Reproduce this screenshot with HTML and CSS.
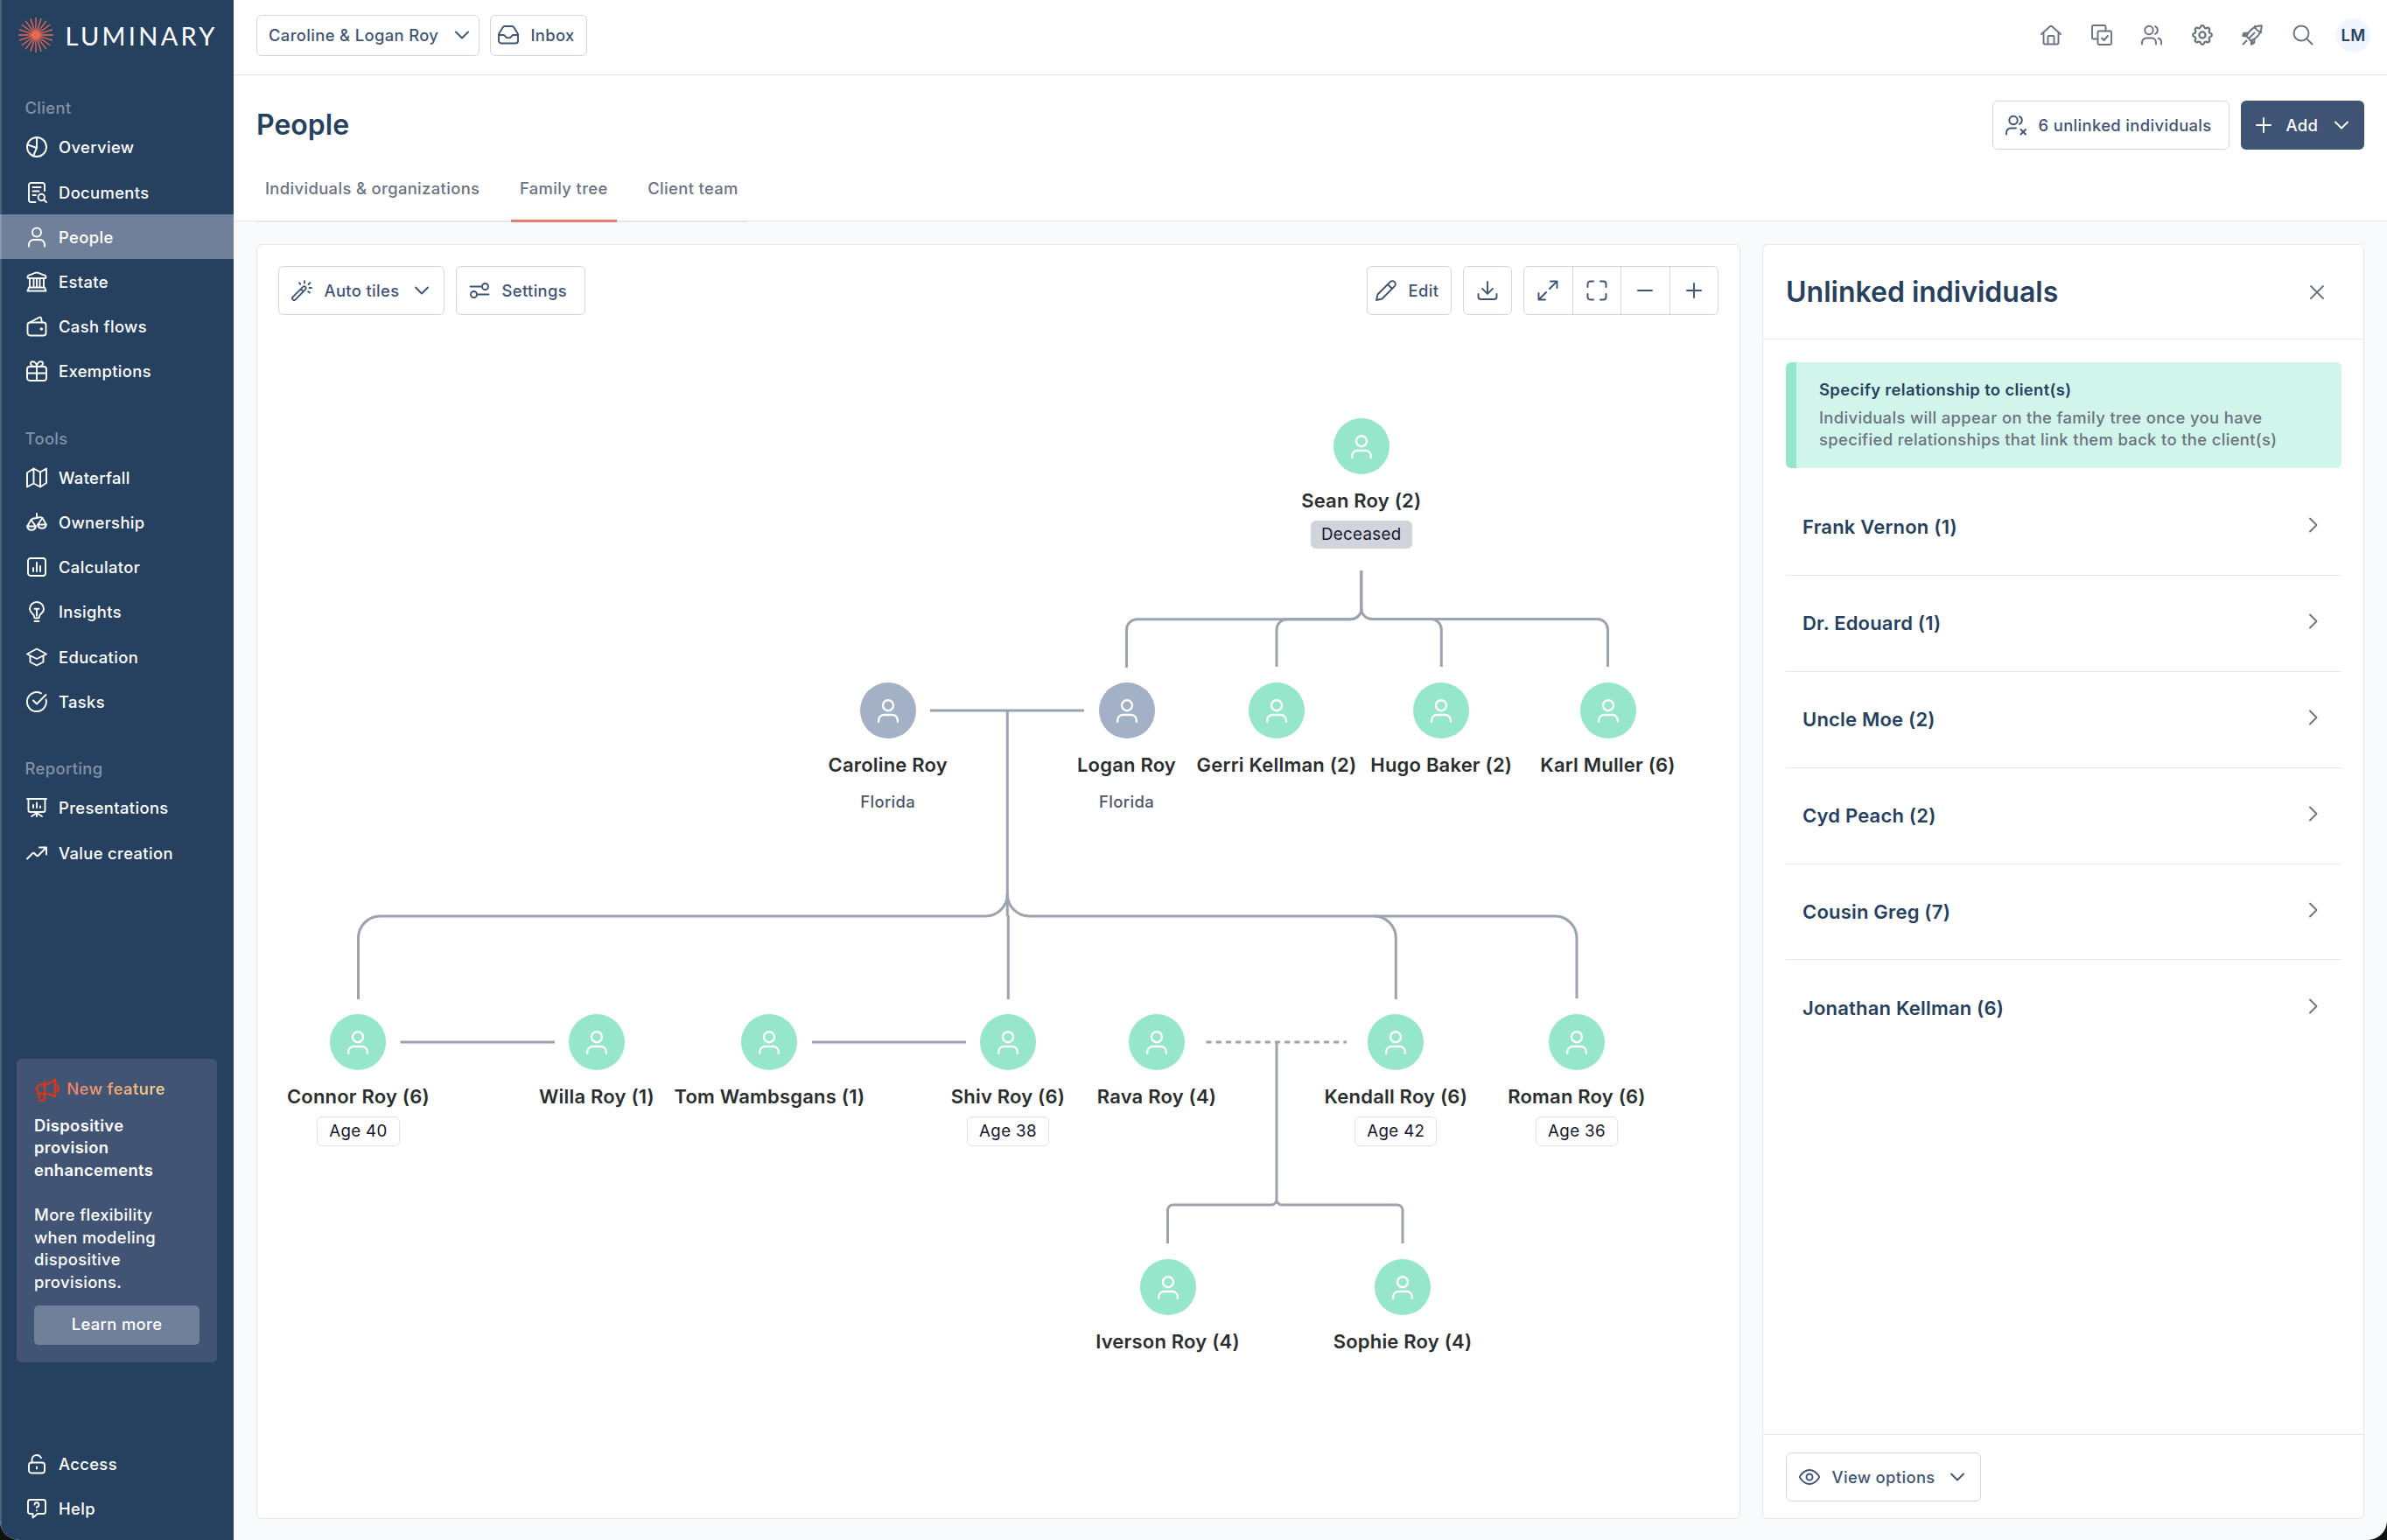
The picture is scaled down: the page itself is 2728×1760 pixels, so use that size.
FILE: index.html
```html
<!DOCTYPE html>
<html lang="en">
<head>
  <meta charset="UTF-8" />
  <meta name="viewport" content="width=device-width, initial-scale=1.0" />
  <title>People - Luminary</title>
  <link rel="stylesheet" href="styles.css">
</head>
<body>

  <!-- Icon sprite -->
  <svg class="sprite" aria-hidden="true">
    <symbol id="i-chevron" viewBox="0 0 24 24"><path d="M5 8.5l7 7 7-7"/></symbol>
    <symbol id="i-right" viewBox="0 0 24 24"><path d="M8 4.5l7.500 7.500L8 19.500"/></symbol>
    <symbol id="i-inbox" viewBox="0 0 24 24"><path d="M5.500 3.500a3 3 0 0 1 2.500-1.500h8a3 3 0 0 1 2.500 1.500L23 11v7.500a3 3 0 0 1-3 3H4a3 3 0 0 1-3-3V11z"/><path d="M1 12h5.500c.8 0 1.300.4 1.700 1.200.7 1.300 2 2.200 3.800 2.200s3.100-.9 3.800-2.200c.4-.8.900-1.200 1.700-1.200H23"/></symbol>
    <symbol id="i-overview" viewBox="0 0 24 24"><circle cx="12" cy="12" r="11"/><path d="M12 1v12L8 22.200M12 13L1.400 9.300"/></symbol>
    <symbol id="i-documents" viewBox="0 0 24 24"><path d="M10.500 23H5.500a2.500 2.500 0 0 1-2.500-2.500v-17A2.500 2.500 0 0 1 5.500 1h13A2.500 2.500 0 0 1 21 3.500V10M7.500 6h9M7.500 10.500h7M7.500 15H11"/><circle cx="17.300" cy="17.500" r="3.700"/><path d="M20 20.200l3 2.800"/></symbol>
    <symbol id="i-person" viewBox="0 0 24 24"><circle cx="12" cy="6.500" r="5"/><path d="M3 22.500v-2A5.500 5.500 0 0 1 8.500 15h7a5.500 5.500 0 0 1 5.500 5.500v2"/></symbol>
    <symbol id="i-avatar" viewBox="0 0 24 27"><circle cx="12" cy="7.200" r="6"/><path d="M1.200 25.800V24a6 6 0 0 1 6-6h9.600a6 6 0 0 1 6 6v1.800"/></symbol>
    <symbol id="i-estate" viewBox="0 0 24 24"><path d="M3 4.500C6 3.800 9.500 1.500 12 1.500s6 2.300 9 3c1.300.4 1.500 1.300 1.500 2.500 0 .7-.4 1-1 1h-19c-.6 0-1-.3-1-1 0-1.200.3-2.200 1.500-2.500zM4 8v10M8.500 8v10M15.500 8v10M20 8v10M12 8v10M3 18.500h18l1.500 4h-21z"/></symbol>
    <symbol id="i-cash" viewBox="0 0 24 24"><rect x="1.500" y="7.500" width="21" height="15" rx="3"/><path d="M3 8L15 1.600c.8-.4 1.800 0 2 1L18 7.500"/><circle cx="17.300" cy="15" r=".8"/></symbol>
    <symbol id="i-gift" viewBox="0 0 24 24"><rect x="1" y="7" width="22" height="16" rx="3"/><path d="M1 14.500h22M12 7v16M12 7C8.500 7 5 5.800 5 3.500 5 2 6.200 1.200 7.500 1.200 10 1.200 12 4 12 7zM12 7c3.500 0 7-1.200 7-3.500 0-1.500-1.200-2.300-2.500-2.300C14 1.200 12 4 12 7z"/></symbol>
    <symbol id="i-map" viewBox="0 0 24 24"><path d="M1 6.200l7.500-4.700 7.500 4 7-4V18l-7 4.500-7.500-4L1 22.500zM8.500 1.500v17M16 5.500v17"/></symbol>
    <symbol id="i-scales" viewBox="0 0 24 24"><path d="M12 2v5M5.500 9C8 6.500 9.500 7.500 12 7c2.500-.5 4-2 6.500 0"/><path d="M1.200 16.500L5.500 9l5.300 7.500zM13.200 14.500L18.500 7l4.300 7.500z"/><path d="M1.200 16.500a4.900 4.900 0 0 0 9.700 0M13.100 14.500a4.900 4.900 0 0 0 9.700 0"/></symbol>
    <symbol id="i-calc" viewBox="0 0 24 24"><rect x="2" y="2" width="20" height="20" rx="3"/><path d="M8 17v-4M12 17V7M16 17v-6"/></symbol>
    <symbol id="i-bulb" viewBox="0 0 24 24"><path d="M9 17.500c0-1.500-.8-2.300-2-3.300A7.700 7.700 0 0 1 4 8.800 8 8 0 0 1 12 1a8 8 0 0 1 8 7.800c0 2.200-1.200 4.200-3 5.400-1.200 1-2 1.800-2 3.300a2 2 0 0 1-2 2h-2a2 2 0 0 1-2-2zM9.500 23h5M9.500 8.800h5M12 8.800v8"/></symbol>
    <symbol id="i-education" viewBox="0 0 24 24"><path d="M1 8.500L12 2.500l11 6-11 5.500zM4.500 10.500v7L12 21.500l7.500-4v-7"/></symbol>
    <symbol id="i-tasks" viewBox="0 0 24 24"><path d="M22.600 9.500A11 11 0 1 1 17 2.300M8 10.500l4 4L22.500 4"/></symbol>
    <symbol id="i-present" viewBox="0 0 24 24"><path d="M1 2h22M2.500 2v13a2 2 0 0 0 2 2h15a2 2 0 0 0 2-2V2M8 12V9M12 12V6.500M16 12v-1.500M12 17v5M12 18l-6 4M12 18l6 4"/></symbol>
    <symbol id="i-trend" viewBox="0 0 24 24"><path d="M1 18.500l6-6c.8-.8 1.700-.8 2.500 0l2 2c.8.8 1.700.8 2.500 0L22.500 6M15 5.500h8v8"/></symbol>
    <symbol id="i-horn" viewBox="0 0 30 28"><path d="M12 8.500H7.500a5.300 5.300 0 0 0 0 10.500H12c4 0 8 1 12 3V2.500C20 5.500 16 8.500 12 8.500zM12 5.500V24a3 3 0 0 1-6 0L5 19M24 8.500a4 4 0 0 1 0 8"/></symbol>
    <symbol id="i-lock" viewBox="0 0 24 24"><rect x="3" y="10.500" width="18" height="12" rx="3"/><path d="M6.500 10.500V7.500a5.500 5.500 0 0 1 10.500-2.300M12 15.500v2"/></symbol>
    <symbol id="i-help" viewBox="0 0 24 24"><path d="M4.500 2h15A2.500 2.500 0 0 1 22 4.500v11a2.500 2.500 0 0 1-2.500 2.500H13l-5.500 4.500V18h-3A2.500 2.500 0 0 1 2 15.500v-11A2.500 2.500 0 0 1 4.500 2z"/><path d="M9.500 7.500A2.500 2.500 0 1 1 12 10.200V11M12 14.300v.2"/></symbol>
    <symbol id="i-home" viewBox="0 0 24 24"><path d="M1 11l9.800-8.700a1.800 1.800 0 0 1 2.400 0L23 11M3.500 9v11.500A2 2 0 0 0 5.500 22.500h13a2 2 0 0 0 2-2V9M8.500 22.500V14a1 1 0 0 1 1-1h5a1 1 0 0 1 1 1v8.500"/></symbol>
    <symbol id="i-copy" viewBox="0 0 24 24"><path d="M7.500 16.500h-5A1.500 1.500 0 0 1 1 15V2.500A1.500 1.500 0 0 1 2.500 1H15a1.500 1.500 0 0 1 1.500 1.500v5"/><rect x="7.500" y="7.500" width="15.500" height="15.500" rx="1.500"/><path d="M12 15.500l2.500 2.500 4.500-5"/></symbol>
    <symbol id="i-people" viewBox="0 0 24 24"><circle cx="9" cy="6.500" r="4.700"/><path d="M1 22.500v-2a5 5 0 0 1 5-5h6a5 5 0 0 1 5 5v2M16 2.200a4.700 4.700 0 0 1 0 8.600M19.500 15.800a4.500 4.500 0 0 1 3.500 4.500v2.200"/></symbol>
    <symbol id="i-unlinked" viewBox="0 0 24 24"><circle cx="9" cy="6.500" r="4.700"/><path d="M1 22.500v-2a5 5 0 0 1 5-5h6M16 2.200a4.700 4.700 0 0 1 0 8.600M17.500 17l5.500 5.500M23 17l-5.500 5.500"/></symbol>
    <symbol id="i-gear" viewBox="2 2 20 20"><path d="M10.325 4.317c.426-1.756 2.924-1.756 3.350 0a1.724 1.724 0 0 0 2.573 1.066c1.543-.94 3.310.826 2.370 2.370a1.724 1.724 0 0 0 1.065 2.572c1.756.426 1.756 2.924 0 3.350a1.724 1.724 0 0 0-1.066 2.573c.94 1.543-.826 3.310-2.370 2.370a1.724 1.724 0 0 0-2.572 1.065c-.426 1.756-2.924 1.756-3.350 0a1.724 1.724 0 0 0-2.573-1.066c-1.543.94-3.310-.826-2.370-2.370a1.724 1.724 0 0 0-1.065-2.572c-1.756-.426-1.756-2.924 0-3.350a1.724 1.724 0 0 0 1.066-2.573c-.94-1.543.826-3.310 2.370-2.370 1 .608 2.296.07 2.572-1.065z"/><circle cx="12" cy="12" r="3"/></symbol>
    <symbol id="i-rocket" viewBox="0 0 24 24"><path d="M5.500 13.500C8 7.500 13 1.500 22.800 1.200 22.500 11 16.500 16 10.500 18.500zM15 1.800C16 6 18 8 22.200 9M8 9.500L3 9.800 1.200 13l4.300.5M14.500 16l-.3 5-3.200 1.800-.5-4.300M5.500 18.500L1.500 22.500M6 12.500L1.500 10.500M8.500 15.500l6-6M11.500 18l1 3"/></symbol>
    <symbol id="i-search" viewBox="0 0 24 24"><circle cx="10" cy="10" r="8.500"/><path d="M16.200 16.200l6.300 6.300"/></symbol>
    <symbol id="i-plus" viewBox="0 0 24 24"><path d="M12 4v16M4 12h16"/></symbol>
    <symbol id="i-minus" viewBox="0 0 24 24"><path d="M4 12h16"/></symbol>
    <symbol id="i-close" viewBox="0 0 24 24"><path d="M5 5l14 14M19 5L5 19"/></symbol>
    <symbol id="i-wand" viewBox="0 0 24 24"><path d="M1.700 19.300L13.200 7.800a2 2 0 0 1 2.900 2.900L4.700 22.300a2 2 0 0 1-3-3zM10.800 10.300l2.800 2.800M15 1.200v2.300M9 3.200l1.300 1.600M21.300 3.200L19.600 5M23 9h-2.500M21 14.500l-1.800-1.300"/></symbol>
    <symbol id="i-settings" viewBox="0 0 24 24"><circle cx="18.500" cy="7.500" r="3.500"/><circle cx="5.500" cy="16.500" r="3.500"/><path d="M1.500 7.500H15M9 16.500h13.500"/></symbol>
    <symbol id="i-edit" viewBox="0 0 24 24"><path d="M1 23l1.500-6.500L16.800 2.200a3.500 3.500 0 0 1 5 5L7.500 21.500zM14 5l5 5"/></symbol>
    <symbol id="i-download" viewBox="0 0 24 24"><path d="M12 2v13.500M6 9.800l6 6 6-6M1.500 16v3A3 3 0 0 0 4.500 22h15a3 3 0 0 0 3-3v-3"/></symbol>
    <symbol id="i-expand" viewBox="0 0 24 24"><path d="M14 10l8.500-8.500M15 1.500h7.500V9M10 14l-8.500 8.500M1.500 15v7.500H9"/></symbol>
    <symbol id="i-frame" viewBox="0 0 24 24"><path d="M1.500 8V4.500a3 3 0 0 1 3-3H8M16 1.500h3.500a3 3 0 0 1 3 3V8M22.500 16v3.500a3 3 0 0 1-3 3H16M8 22.500H4.500a3 3 0 0 1-3-3V16"/></symbol>
    <symbol id="i-eye" viewBox="0 0 24 24"><path d="M1.500 10.500C4 7 7.500 4 12 4s8 3 10.500 6.500c.7 1 .7 2 0 3C20 17 16.500 20 12 20s-8-3-10.500-6.500c-.7-1-.7-2 0-3z"/><circle cx="12" cy="12" r="3.500"/></symbol>
  </svg>

  <div class="app">

    <aside class="sidebar">
      <div class="logo">
        <svg class="logo-mark" viewBox="-20 -20 40 40">
          <path d="M0-20V20M-20 0H20M-6.200-19L6.200 19M6.200-19L-6.200 19M-11.800-16.200L11.800 16.200M11.800-16.200L-11.800 16.200M-16.200-11.800L16.200 11.800M16.200-11.800L-16.200 11.800M-19-6.200L19 6.200M19-6.200L-19 6.200"/>
          <circle r="3.500"/>
        </svg>
        <span class="logo-text">LUMINARY</span>
      </div>

      <nav class="nav-group">
        <h2 class="nav-heading">Client</h2>
        <a class="nav-item"><svg class="icon"><use href="#i-overview"/></svg>Overview</a>
        <a class="nav-item"><svg class="icon"><use href="#i-documents"/></svg>Documents</a>
        <a class="nav-item active"><svg class="icon"><use href="#i-person"/></svg>People</a>
        <a class="nav-item"><svg class="icon"><use href="#i-estate"/></svg>Estate</a>
        <a class="nav-item"><svg class="icon"><use href="#i-cash"/></svg>Cash flows</a>
        <a class="nav-item"><svg class="icon"><use href="#i-gift"/></svg>Exemptions</a>
      </nav>

      <nav class="nav-group">
        <h2 class="nav-heading">Tools</h2>
        <a class="nav-item"><svg class="icon"><use href="#i-map"/></svg>Waterfall</a>
        <a class="nav-item"><svg class="icon"><use href="#i-scales"/></svg>Ownership</a>
        <a class="nav-item"><svg class="icon"><use href="#i-calc"/></svg>Calculator</a>
        <a class="nav-item"><svg class="icon"><use href="#i-bulb"/></svg>Insights</a>
        <a class="nav-item"><svg class="icon"><use href="#i-education"/></svg>Education</a>
        <a class="nav-item"><svg class="icon"><use href="#i-tasks"/></svg>Tasks</a>
      </nav>

      <nav class="nav-group">
        <h2 class="nav-heading">Reporting</h2>
        <a class="nav-item"><svg class="icon"><use href="#i-present"/></svg>Presentations</a>
        <a class="nav-item"><svg class="icon"><use href="#i-trend"/></svg>Value creation</a>
      </nav>

      <div class="feature">
        <div class="feature-head">
          <svg class="feature-icon"><use href="#i-horn"/></svg>
          <span class="feature-label">New feature</span>
        </div>
        <p class="feature-title">Dispositive provision enhancements</p>
        <p class="feature-text">More flexibility when modeling dispositive provisions.</p>
        <button class="feature-btn">Learn more</button>
      </div>

      <nav class="nav-bottom">
        <a class="nav-item"><svg class="icon"><use href="#i-lock"/></svg>Access</a>
        <a class="nav-item"><svg class="icon"><use href="#i-help"/></svg>Help</a>
      </nav>
    </aside>

    <main class="main">
      <header class="topbar">
        <button class="btn btn-client">Caroline &amp; Logan Roy<svg class="chevron"><use href="#i-chevron"/></svg></button>
        <button class="btn btn-inbox"><svg class="icon"><use href="#i-inbox"/></svg>Inbox</button>
        <div class="top-icons">
          <svg class="icon"><use href="#i-home"/></svg>
          <svg class="icon"><use href="#i-copy"/></svg>
          <svg class="icon"><use href="#i-people"/></svg>
          <svg class="icon"><use href="#i-gear"/></svg>
          <svg class="icon"><use href="#i-rocket"/></svg>
          <svg class="icon"><use href="#i-search"/></svg>
        </div>
        <div class="user">LM</div>
      </header>

      <section class="page-head">
        <div class="title-row">
          <h1>People</h1>
          <button class="btn btn-unlinked"><svg class="icon"><use href="#i-unlinked"/></svg>6 unlinked individuals</button>
          <button class="btn btn-add"><svg class="icon"><use href="#i-plus"/></svg>Add<svg class="chevron"><use href="#i-chevron"/></svg></button>
        </div>
        <div class="tabs">
          <a class="tab">Individuals &amp; organizations</a>
          <a class="tab active">Family tree</a>
          <a class="tab">Client team</a>
        </div>
      </section>

      <div class="content">
        <section class="card tree">
          <div class="toolbar">
            <button class="btn btn-tiles"><svg class="icon"><use href="#i-wand"/></svg>Auto tiles<svg class="chevron"><use href="#i-chevron"/></svg></button>
            <button class="btn btn-settings"><svg class="icon"><use href="#i-settings"/></svg>Settings</button>
            <button class="btn btn-edit"><svg class="icon"><use href="#i-edit"/></svg>Edit</button>
            <button class="btn btn-icon"><svg class="icon"><use href="#i-download"/></svg></button>
            <div class="btn-group">
              <button><svg class="icon"><use href="#i-expand"/></svg></button>
              <button><svg class="icon"><use href="#i-frame"/></svg></button>
              <button><svg class="icon"><use href="#i-minus"/></svg></button>
              <button><svg class="icon"><use href="#i-plus"/></svg></button>
            </div>
          </div>

          <div class="canvas">
            <svg class="links" viewBox="294 280 1694 1455">
              <!-- Sean and his children -->
              <path d="M1555.800 652V695.700a12 12 0 0 1-12 12H1299.500a12 12 0 0 0-12 12V763"/>
              <path d="M1543.800 707.700H1471a12 12 0 0 0-12 12V762"/>
              <path d="M1555.800 652V695.500a12 12 0 0 0 12 12H1825.500a12 12 0 0 1 12 12V762"/>
              <path d="M1567.800 707.500H1635.300a12 12 0 0 1 12 12V762"/>
              <!-- Caroline and Logan -->
              <path d="M1063 812H1239M1151.300 812V1047M1152.300 1046V1142"/>
              <path d="M1151.300 1022a25 25 0 0 1-25 25H434.500a25 25 0 0 0-25 25V1142"/>
              <path d="M1151.300 1022a25 25 0 0 0 25 25H1570.300a25 25 0 0 1 25 25V1142"/>
              <path d="M1570.300 1047H1777a25 25 0 0 1 25 25V1141"/>
              <!-- couples -->
              <path d="M457.500 1191H634M928 1191H1104"/>
              <path class="dashed" d="M1378.500 1191H1539"/>
              <path d="M1459 1191V1371a6 6 0 0 1-6 6H1340.500a6 6 0 0 0-6 6V1421M1459 1371a6 6 0 0 0 6 6H1597a6 6 0 0 1 6 6V1421"/>
            </svg>

            <div class="node sean"><span class="avatar"><svg><use href="#i-avatar"/></svg></span><b>Sean Roy (2)</b><span class="badge deceased">Deceased</span></div>

            <div class="node caroline client"><span class="avatar"><svg><use href="#i-avatar"/></svg></span><b>Caroline Roy</b><span class="place">Florida</span></div>
            <div class="node logan client"><span class="avatar"><svg><use href="#i-avatar"/></svg></span><b>Logan Roy</b><span class="place">Florida</span></div>
            <div class="node gerri"><span class="avatar"><svg><use href="#i-avatar"/></svg></span><b>Gerri Kellman (2)</b></div>
            <div class="node hugo"><span class="avatar"><svg><use href="#i-avatar"/></svg></span><b>Hugo Baker (2)</b></div>
            <div class="node karl"><span class="avatar"><svg><use href="#i-avatar"/></svg></span><b>Karl Muller (6)</b></div>

            <div class="node connor"><span class="avatar"><svg><use href="#i-avatar"/></svg></span><b>Connor Roy (6)</b><span class="badge">Age 40</span></div>
            <div class="node willa"><span class="avatar"><svg><use href="#i-avatar"/></svg></span><b>Willa Roy (1)</b></div>
            <div class="node tom"><span class="avatar"><svg><use href="#i-avatar"/></svg></span><b>Tom Wambsgans (1)</b></div>
            <div class="node shiv"><span class="avatar"><svg><use href="#i-avatar"/></svg></span><b>Shiv Roy (6)</b><span class="badge">Age 38</span></div>
            <div class="node rava"><span class="avatar"><svg><use href="#i-avatar"/></svg></span><b>Rava Roy (4)</b></div>
            <div class="node kendall"><span class="avatar"><svg><use href="#i-avatar"/></svg></span><b>Kendall Roy (6)</b><span class="badge">Age 42</span></div>
            <div class="node roman"><span class="avatar"><svg><use href="#i-avatar"/></svg></span><b>Roman Roy (6)</b><span class="badge">Age 36</span></div>

            <div class="node iverson"><span class="avatar"><svg><use href="#i-avatar"/></svg></span><b>Iverson Roy (4)</b></div>
            <div class="node sophie"><span class="avatar"><svg><use href="#i-avatar"/></svg></span><b>Sophie Roy (4)</b></div>
          </div>
        </section>

        <aside class="card panel">
          <div class="panel-head">
            <h2>Unlinked individuals</h2>
            <svg class="icon"><use href="#i-close"/></svg>
          </div>
          <div class="panel-body">
            <div class="notice">
              <strong>Specify relationship to client(s)</strong>
              <p>Individuals will appear on the family tree once you have specified relationships that link them back to the client(s)</p>
            </div>
            <ul class="people">
              <li>Frank Vernon (1)<svg class="chevron"><use href="#i-right"/></svg></li>
              <li>Dr. Edouard (1)<svg class="chevron"><use href="#i-right"/></svg></li>
              <li>Uncle Moe (2)<svg class="chevron"><use href="#i-right"/></svg></li>
              <li>Cyd Peach (2)<svg class="chevron"><use href="#i-right"/></svg></li>
              <li>Cousin Greg (7)<svg class="chevron"><use href="#i-right"/></svg></li>
              <li>Jonathan Kellman (6)<svg class="chevron"><use href="#i-right"/></svg></li>
            </ul>
          </div>
          <div class="panel-foot">
            <button class="btn btn-view"><svg class="icon"><use href="#i-eye"/></svg>View options<svg class="chevron"><use href="#i-chevron"/></svg></button>
          </div>
        </aside>
      </div>
    </main>

  </div>

</body>
</html>
```
FILE: styles.css
```css
* {
  box-sizing: border-box;
}

body {
  margin: 0;
  background: #0d120f;
  font-family: Inter, sans-serif;
  font-size: 18.4px;
  font-weight: 500;
  letter-spacing: 0.36px;
  color: #26415f;
}

h1, h2, p, ul {
  margin: 0;
  padding: 0;
}

button {
  font: inherit;
  letter-spacing: inherit;
  color: inherit;
  margin: 0;
}

.sprite {
  display: none;
}

svg {
  fill: none;
  stroke: currentColor;
  stroke-width: 1.9;
  stroke-linecap: round;
  stroke-linejoin: round;
  flex: none;
}

.icon {
  width: 24px;
  height: 24px;
}

.chevron {
  width: 24px;
  height: 24px;
}

.app {
  display: flex;
  width: 2728px;
  height: 1760px;
  border-radius: 0 0 22px 22px;
  overflow: hidden;
  background: #f9fafc;
}

/* Sidebar */
.sidebar {
  position: relative;
  display: flex;
  flex-direction: column;
  width: 267px;
  height: 1760px;
  padding-bottom: 10.6px;
  background: #26415f;
  color: #fff;
  flex: none;
}

.sidebar::after {
  content: "";
  position: absolute;
  left: 0;
  top: 0;
  bottom: 0;
  width: 2px;
  background: rgba(255, 255, 255, 0.18);
}

.logo {
  display: flex;
  align-items: center;
  height: 80px;
  padding-left: 21px;
  margin-bottom: 24.4px;
}

.logo-mark {
  width: 40px;
  height: 40px;
  color: #ef6651;
  stroke-width: 1.3;
  stroke-linecap: butt;
}

.logo-mark circle {
  fill: currentColor;
}

.logo-text {
  margin-left: 13.5px;
  font-family: Lato, sans-serif;
  font-weight: 400;
  font-size: 29px;
  letter-spacing: 3.3px;
}

.nav-group {
  margin-bottom: 32px;
}

.nav-heading {
  height: 38.4px;
  padding-left: 28.5px;
  line-height: 39.5px;
  font-size: 18.4px;
  font-weight: 500;
  color: #8391a8;
}

.nav-item {
  display: flex;
  align-items: center;
  height: 51.2px;
  padding-left: 29.5px;
  gap: 13.5px;
}

.nav-item.active {
  background: #71809a;
}

.feature {
  width: 229px;
  height: 347px;
  margin: auto 0 90.5px 19px;
  padding: 19px 20px;
  border-radius: 6px;
  background: #415474;
  line-height: 25.6px;
}

.feature-head {
  display: flex;
  align-items: center;
  height: 32px;
  gap: 7.5px;
}

.feature-icon {
  width: 30px;
  height: 28px;
  color: #d0391f;
  stroke-width: 2.6;
}

.feature-label {
  font-weight: 600;
  background: linear-gradient(90deg, #ea7a66, #f0d98a);
  -webkit-background-clip: text;
  background-clip: text;
  color: transparent;
}

.feature-title {
  margin-top: 13px;
  padding-right: 30px;
  font-weight: 600;
}

.feature-text {
  margin-top: 25.6px;
  padding-right: 30px;
}

.feature-btn {
  display: block;
  width: 189px;
  height: 45px;
  margin-top: 13.5px;
  border: 0;
  border-radius: 5px;
  background: #71809a;
  color: #fff;
}

/* Buttons */
.btn {
  display: flex;
  align-items: center;
  height: 56px;
  padding: 0 14px 1px;
  border: 1px solid #d1d5db;
  border-radius: 6px;
  background: #fff;
  color: #3f5475;
  white-space: nowrap;
}

.btn .icon {
  margin-right: 13.5px;
}

.btn .chevron {
  margin-left: auto;
}

.btn-client {
  width: 255px;
  height: 47px;
  padding: 0 7px 0 13px;
}

.btn-inbox {
  width: 111px;
  height: 47px;
  margin-left: 12px;
  padding: 0 8px;
}

.btn-unlinked {
  width: 271px;
  margin-left: auto;
}

.btn-add {
  width: 141px;
  margin-left: 13px;
  border: 0;
  background: #3f5475;
  color: #fff;
}

/* Top bar */
.main {
  display: flex;
  flex-direction: column;
  flex: 1;
  min-width: 0;
}

.topbar {
  display: flex;
  align-items: center;
  height: 86px;
  padding: 0 19px 5px 26px;
  border-bottom: 1px solid #e5e7eb;
  background: #fff;
}

.top-icons {
  display: flex;
  gap: 33.6px;
  margin-left: auto;
  color: #6b7280;
}

.user {
  width: 39px;
  height: 39px;
  margin-left: 26px;
  border-radius: 50%;
  background: #eff6ff;
  line-height: 38px;
  text-align: center;
  font-weight: 600;
}

.page-head {
  height: 167px;
  padding: 29px 26px 0;
  border-bottom: 1px solid #e5e7eb;
  background: #fff;
}

.title-row {
  display: flex;
  height: 56px;
}

.title-row h1 {
  font-size: 32px;
  line-height: 55px;
  font-weight: 600;
  letter-spacing: 0;
}

.tabs {
  display: inline-flex;
  gap: 25.6px;
  height: 83px;
  border-bottom: 2px solid #e5e7eb;
}

.tab {
  height: 83px;
  padding: 0 10px;
  line-height: 89px;
  color: #6b7280;
}

.tab.active {
  border-bottom: 3px solid #e87b6b;
}

/* Content */
.content {
  display: flex;
  gap: 25px;
  flex: 1;
  padding: 26px 26px 24px;
}

.card {
  border: 1px solid #e5e7eb;
  border-radius: 6px;
  background: #fff;
}

.tree {
  position: relative;
  width: 1696px;
}

.toolbar {
  position: relative;
  z-index: 1;
  display: flex;
  padding: 24px 24px 0;
}

.btn-tiles {
  width: 190px;
  padding-right: 13px;
}

.btn-settings {
  width: 148px;
  margin-left: 13px;
}

.btn-edit {
  width: 97px;
  margin-left: auto;
  padding: 0 9px 1px;
}

.btn-icon {
  width: 56px;
  margin-left: 13px;
  justify-content: center;
}

.btn-icon .icon {
  margin: 0;
}

.btn-group {
  display: flex;
  width: 223px;
  height: 56px;
  margin-left: 13px;
  border: 1px solid #d1d5db;
  border-radius: 6px;
  color: #3f5475;
}

.btn-group button {
  display: flex;
  flex: 1;
  align-items: center;
  justify-content: center;
  padding: 0 0 1px;
  border: 0;
  background: none;
}

.btn-group button + button {
  border-left: 1px solid #d1d5db;
}

/* Family tree, nodes are placed by the centre of their avatar */
.canvas {
  position: absolute;
  inset: 0;
}

.links {
  position: absolute;
  width: 1694px;
  height: 1455px;
  color: #9ca3af;
  stroke-width: 3;
  stroke-linecap: butt;
}

.dashed {
  stroke-dasharray: 6.2 5;
}

.node {
  position: absolute;
  display: flex;
  flex-direction: column;
  align-items: center;
  width: 240px;
  margin: -32px 0 0 -120px;
}

.avatar {
  display: flex;
  align-items: center;
  justify-content: center;
  width: 64px;
  height: 64px;
  border-radius: 50%;
  background: #95e6cb;
  color: #fff;
}

.avatar svg {
  width: 24px;
  height: 27px;
  stroke-width: 2.4;
}

.client .avatar {
  background: #a3b0c5;
}

.node b {
  margin-top: 14px;
  line-height: 32px;
  font-size: 22px;
  font-weight: 600;
  letter-spacing: 0.2px;
  color: #2a2e2f;
  white-space: nowrap;
}

.badge {
  height: 34px;
  margin-top: 6.5px;
  padding: 0 13px;
  border: 1px solid #e0e2e8;
  border-radius: 6px;
  line-height: 32px;
  font-size: 18.7px;
  font-weight: 400;
  color: #14172e;
}

.badge.deceased {
  height: 32px;
  margin-top: 7px;
  padding: 0 12px;
  border: 0;
  background: #d1d5db;
  line-height: 31px;
}

.place {
  margin-top: 13.5px;
  line-height: 25.6px;
  color: #4b5567;
}

.sean { left: 1261.8px; top: 230px; }
.caroline { left: 720.7px; top: 532px; }
.logan { left: 993.5px; top: 532px; }
.gerri { left: 1165px; top: 532px; }
.hugo { left: 1353.3px; top: 532px; }
.karl { left: 1543.5px; top: 532px; }
.connor { left: 115.4px; top: 911px; }
.willa { left: 388px; top: 911px; }
.tom { left: 585.4px; top: 911px; }
.shiv { left: 858px; top: 911px; }
.rava { left: 1028px; top: 911px; }
.kendall { left: 1301.3px; top: 911px; }
.roman { left: 1508px; top: 911px; }
.iverson { left: 1040.5px; top: 1191px; }
.sophie { left: 1309px; top: 1191px; }

/* Unlinked individuals */
.panel {
  display: flex;
  flex-direction: column;
  width: 688px;
}

.panel-head {
  display: flex;
  align-items: center;
  justify-content: space-between;
  height: 108px;
  padding: 0 41px 0 26px;
  border-bottom: 1px solid #e5e7eb;
}

.panel-head h2 {
  font-size: 32px;
  font-weight: 600;
  letter-spacing: 0;
}

.panel-head .icon {
  color: #6b7280;
}

.panel-body {
  flex: 1;
  padding: 26px 25px 0 26px;
}

.notice {
  height: 121px;
  padding: 19px 30px 0 26px;
  border-left: 12px solid #95e6cb;
  border-radius: 6px;
  background: #d1f5ea;
  line-height: 25.6px;
}

.notice strong {
  font-weight: 600;
}

.notice p {
  margin-top: 6px;
  color: #6b7280;
}

.people {
  margin-top: 13px;
  list-style: none;
}

.people li {
  display: flex;
  align-items: center;
  justify-content: space-between;
  height: 109.9px;
  padding: 0 20px 0 19px;
  border-bottom: 1px solid #e5e7eb;
  font-size: 22px;
  font-weight: 600;
  letter-spacing: 0.2px;
}

.people li:last-child {
  border-bottom: 0;
}

.people .chevron {
  margin-top: -4px;
  color: #6b7280;
}

.panel-foot {
  height: 96px;
  padding: 20px 26px;
  border-top: 1px solid #e5e7eb;
}

.btn-view {
  width: 223px;
}
```
